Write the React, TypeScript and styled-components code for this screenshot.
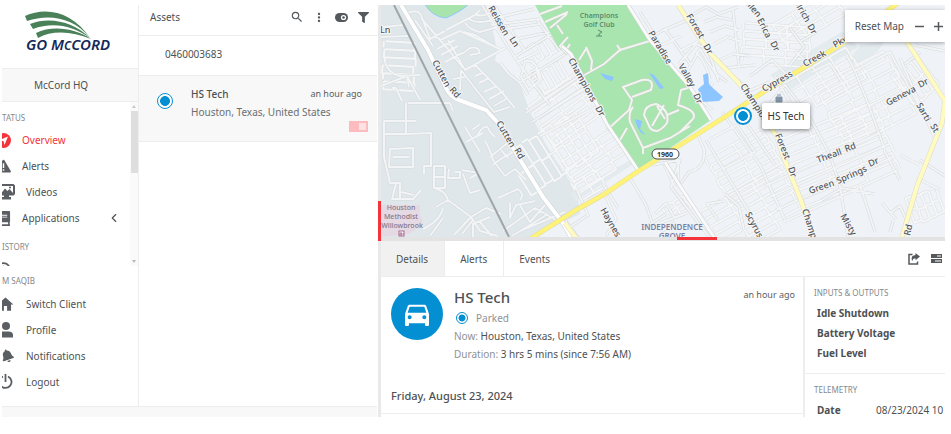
import React from 'react';
import styled, { createGlobalStyle } from 'styled-components';
import { FaBell, FaBook, FaFilter, FaHistory } from 'react-icons/fa';
import { MdDirectionsCar, MdHome, MdMoreVert, MdSearch } from 'react-icons/md';
import { FiChevronLeft } from 'react-icons/fi';

const GlobalStyle = createGlobalStyle`
  * { box-sizing: border-box; }
  body {
    margin: 0;
    background: #fff;
    color: #4d5154;
    font: 10px/18px "Noto Sans", "Open Sans", sans-serif;
  }
  button, input { font: inherit; color: inherit; }
  button { border: 0; padding: 0; background: none; cursor: pointer; }
  svg { display: block; }
`;

const LINE = '#ededed';
const BLUE = '#058fd3';
const RED = '#f5333b';

const Page = styled.div`
  display: grid;
  grid-template-columns: 375px 4px minmax(0, 1fr);
  grid-template-rows: minmax(0, 1fr);
  height: 100vh;
  min-height: 434px;
  padding: 5px 6px 17px 2px;
`;

const LeftSide = styled.div`
  display: grid;
  grid-template-columns: 137px minmax(0, 1fr);
  grid-template-rows: minmax(0, 1fr) 11px;
`;

const Sidebar = styled.aside`
  display: flex;
  flex-direction: column;
  overflow: hidden;
  border-right: 1px solid ${LINE};
`;

const LogoBox = styled.a`
  display: block;
  height: 63px;
  padding: 4px 0 0 19px;
`;

const Client = styled.div`
  height: 34px;
  padding-left: 32px;
  line-height: 32px;
  border: solid ${LINE};
  border-width: 1px 0;
  background: #f8f8f8;
`;

const ScrollArea = styled.div`
  display: flex;
  height: 164px;
  overflow: hidden;
`;

const Nav = styled.nav`
  flex: 1;
  margin-left: -6px;
`;

const SectionLabel = styled.h2`
  margin: 0;
  font-size: 8px;
  font-weight: 400;
  line-height: 18px;
  color: #85888b;
`;

const NavLabel = styled(SectionLabel)<{ $gap?: boolean }>`
  padding: ${p => (p.$gap ? '7px' : '0')} 0 0 6px;
`;

const NavLink = styled.a<{ $active?: boolean }>`
  display: flex;
  align-items: center;
  gap: 11px;
  height: 26px;
  padding-right: 9px;
  color: ${p => (p.$active ? RED : 'inherit')};
  text-decoration: none;
`;

const NavIcon = styled.span<{ $wide?: boolean; $tint?: string }>`
  display: flex;
  justify-content: flex-end;
  width: ${p => (p.$wide ? 19 : 15)}px;
  flex: none;
  color: ${p => p.$tint || '#5b5f63'};
`;

const Grow = styled.span`
  flex: 1;
`;

const Scrollbar = styled.div`
  display: flex;
  flex-direction: column;
  align-items: center;
  gap: 3px;
  width: 8px;
  padding: 3px 0;
  background: #fafafa;
`;

const Thumb = styled.div`
  width: 7px;
  height: 62px;
  background: #dedede;
`;

const StatusNav = styled.div`
  padding-top: 7px;
`;

const AccountNav = styled.div`
  padding-top: 6px;
  & > h2 { padding-bottom: 1px; }
`;

const Footer = styled.footer`
  grid-column: 1 / -1;
  border-top: 1px solid ${LINE};
  background: #f8f8f8;
`;

const Assets = styled.section`
  display: flex;
  flex-direction: column;
  min-width: 0;
`;

const AssetsHeader = styled.header`
  display: flex;
  align-items: center;
  height: 31px;
  padding: 0 7px 6px 11px;
  border-bottom: 1px solid ${LINE};
`;

const PanelTitle = styled.h1`
  flex: 1;
  margin: 0;
  font-size: 10px;
  font-weight: 400;
`;

const Tools = styled.div`
  display: flex;
  gap: 8px;
`;

const Tool = styled.button`
  display: flex;
  align-items: center;
  justify-content: center;
  width: 14px;
  height: 16px;
  color: #55595c;
`;

const GroupRow = styled.div`
  height: 39px;
  padding-left: 26px;
  line-height: 37px;
`;

const AssetRow = styled.article`
  display: grid;
  grid-template-columns: 34px minmax(0, 1fr) auto;
  grid-template-rows: 18px 18px 12px;
  height: 67px;
  padding: 9px 9px 0 18px;
  border: solid ${LINE};
  border-width: 1px 0;
  background: #f8f8f8;
`;

const AssetName = styled.h2`
  margin: 0;
  font-size: 10px;
  font-weight: 500;
  line-height: 18px;
`;

const Muted = styled.span`
  color: #6c6f72;
`;

const Faint = styled.span`
  color: #8f9295;
`;

const Time = styled.time`
  font-size: 9px;
  line-height: 18px;
  color: #5b5e61;
`;

const AssetPlace = styled(Muted)`
  grid-column: 2 / 4;
`;

const Dot = styled.span<{ $size: number }>`
  display: block;
  flex: none;
  width: ${p => p.$size}px;
  height: ${p => p.$size}px;
  border: ${p => (p.$size > 16 ? 2 : 1)}px solid ${BLUE};
  border-radius: 50%;
  padding: 2px;
  background: radial-gradient(circle closest-side, ${BLUE} 0 65%, #fff 75%);
`;

const AssetDot = styled(Dot)`
  grid-row: span 2;
  margin-top: 8px;
`;

const AssetTime = styled(Time)`
  padding-right: 6px;
`;

const ToggleTrack = styled.span`
  grid-column: 3;
  justify-self: end;
  display: flex;
  justify-content: flex-end;
  width: 19px;
  height: 11px;
  padding: 2px;
  background: #fcbcbf;
  &::after {
    content: '';
    width: 7px;
    background: #fde2e3;
  }
`;

const Splitter = styled.div`
  display: flex;
  flex-direction: column;
  margin-left: 1px;
  background: #e9e9e9;
`;

const SplitterGrip = styled.div`
  height: 40px;
  margin-top: 196px;
  background: ${RED};
`;

const Main = styled.main`
  display: grid;
  grid-template-rows: minmax(0, 232fr) 4px minmax(0, 176fr);
  min-width: 0;
`;

const MapPane = styled.div`
  position: relative;
  overflow: hidden;
  background: #eff3f8;
`;

const MapSvg = styled.svg`
  position: absolute;
  inset: 0;
  width: 100%;
  height: 100%;
`;

const MapControls = styled.div`
  position: absolute;
  top: 5px;
  right: 0;
  display: flex;
  align-items: center;
  gap: 5px;
  height: 32px;
  padding-left: 10px;
  background: #fff;
  box-shadow: 0 1px 4px rgba(0, 0, 0, 0.35);
`;

const ResetButton = styled.button`
  margin-right: 3px;
`;

const Marker = styled.div`
  position: absolute;
  left: 62.5%;
  top: 102px;
  border-radius: 50%;
  background: #fff;
`;

const MarkerLabel = styled.div`
  position: absolute;
  left: 28px;
  top: -4px;
  padding: 4px 6px;
  border-radius: 2px;
  background: #fff;
  white-space: nowrap;
  color: #333;
  box-shadow: 0 1px 4px rgba(0, 0, 0, 0.5);
`;

const HSplitter = styled.div`
  background: #e3e3e3;
`;

const HGrip = styled.div`
  width: 40px;
  height: 3px;
  margin-left: 52.5%;
  background: ${RED};
`;

const DetailPane = styled.section`
  display: flex;
  flex-direction: column;
  overflow: hidden;
`;

const TabBar = styled.div`
  display: flex;
  align-items: center;
  flex: none;
  height: 36px;
  padding-right: 2px;
  border-bottom: 1px solid ${LINE};
`;

const Tab = styled.button<{ $active?: boolean; $last?: boolean }>`
  height: 35px;
  padding: 0 16px 0 15px;
  border-right: 1px solid ${p => (p.$last ? 'transparent' : LINE)};
  background: ${p => (p.$active ? '#f1f1f1' : 'transparent')};
`;

const DetailGrid = styled.div`
  display: grid;
  grid-template-columns: minmax(0, 1fr) 140px;
  flex: 1;
  min-height: 0;
`;

const Summary = styled.div`
  display: flex;
  flex-direction: column;
  border-right: 2px solid ${LINE};
`;

const SummaryTop = styled.div`
  display: flex;
  gap: 11px;
  height: 108px;
  padding: 11px 8px 0 10px;
`;

const Avatar = styled.div`
  display: flex;
  align-items: center;
  justify-content: center;
  flex: none;
  width: 52px;
  height: 52px;
  border-radius: 50%;
  background: ${BLUE};
  color: #fff;
`;

const Facts = styled.div`
  flex: 1;
  min-width: 0;
  white-space: nowrap;
`;

const VehicleName = styled.h2`
  margin: 0;
  font-size: 15px;
  font-weight: 500;
  line-height: 19px;
`;

const Status = styled.div`
  display: flex;
  align-items: center;
  gap: 8px;
  height: 20px;
  padding: 2px 0 0 2px;
`;

const Fact = styled.p`
  margin: 0;
  line-height: 18px;
`;

const SummaryTime = styled(Time)`
  line-height: 14px;
`;

const DateHeading = styled.h3`
  margin: 0;
  height: 29px;
  padding-left: 10px;
  font-size: 11px;
  font-weight: 500;
  line-height: 22px;
  border-bottom: 1px solid ${LINE};
`;

const Side = styled.div`
  overflow: hidden;
`;

const SideGroup = styled.section`
  height: 97px;
  padding: 7px 0 0 9px;
  border-bottom: 1px solid ${LINE};
  white-space: nowrap;
`;

const SideHeading = styled(SectionLabel)`
  margin-bottom: 1px;
`;

const SideRow = styled.div`
  display: flex;
  height: 20px;
  padding-left: 3px;
  line-height: 20px;
`;

const SideName = styled.strong`
  min-width: 59px;
  font-weight: 700;
`;

const Logo = () => (
  <svg width="92" height="48" viewBox="21 9 92 48" role="img" aria-label="GO McCORD">
    <g fill="#4a8159">
      <path d="M25 16C46 6 73 12 90 38C73 17 49 14 27 21Z" />
      <path d="M30 24C50 16 74 22 90 38C72 25 52 22 33 29Z" />
      <path d="M36 33C52 25 75 28 91 39C72 31 52 30 38 38Z" />
    </g>
    <text x="26" y="50" fontSize="15" fontWeight="600" fontStyle="italic" fill="#14285a" fontFamily='"Noto Sans", sans-serif'>GO M<tspan fontSize="12">C</tspan>CORD</text>
  </svg>
);

const OverviewIcon = () => (
  <svg width="15" height="15" viewBox="0 0 15 15">
    <circle cx="7.500" cy="7.500" r="7.500" fill="currentColor" />
    <path d="M12 3.500L8.500 12L7.500 8L3.500 7Z" fill="#fff" />
  </svg>
);

const WarningIcon = () => (
  <svg width="16" height="14" viewBox="0 0 16 14">
    <path fill="currentColor" fillRule="evenodd" d="M7.200.7Q8 0 8.800.7L15.900 12.500Q16 14 14.800 14H1.200Q0 14 .1 12.500ZM7.200 4V9H8.800V4ZM7.200 10.500V12H8.800V10.500Z" />
  </svg>
);

const VideoIcon = () => (
  <svg width="18" height="16" viewBox="0 0 18 16">
    <path fill="currentColor" fillRule="evenodd" d="M1.500 0H16.500L18 1.500V10L16.500 11.500H12V13H14V15.500H4V13H7V11.500H1.500L0 10V1.500ZM2 2V9.500H4L8 4.500L10.500 7L12.500 5L16 9V2Z" />
    <circle cx="13" cy="3.600" r="1" fill="currentColor" />
  </svg>
);

const PersonIcon = () => (
  <svg width="16" height="16" viewBox="0 0 16 16">
    <circle cx="7" cy="4" r="4" fill="currentColor" />
    <path d="M0 15.500V13Q0 9.500 4 9.500H9.500Q14 9.500 14 13V15.500Z" fill="currentColor" />
  </svg>
);

const RingingIcon = () => (
  <svg width="20" height="16" viewBox="0 0 20 16">
    <g transform="rotate(-18 11 8)"><FaBell x="5" y="1" size={14} /></g>
    <path d="M5 2Q2 5 3 10" fill="none" stroke="currentColor" strokeWidth="1.500" />
  </svg>
);

const PowerIcon = () => (
  <svg width="17" height="16" viewBox="0 0 17 16">
    <path d="M5 2.500A6 6 0 1 0 10 2.500M7.500 0V8" fill="none" stroke="currentColor" strokeWidth="1.800" />
  </svg>
);

const ToggleIcon = () => (
  <svg width="13" height="9" viewBox="0 0 13 9">
    <rect width="13" height="9" rx="4.500" fill="currentColor" />
    <circle cx="8.500" cy="4.500" r="2.600" fill="#fff" />
    <circle cx="8.500" cy="4.500" r="1.300" fill="currentColor" />
  </svg>
);

const ShareIcon = () => (
  <svg width="12" height="12" viewBox="0 0 12 12">
    <path d="M4.500 1.500H1V11H9.500V8.500" fill="none" stroke="currentColor" strokeWidth="1.500" />
    <path d="M7.500 0L12 3.600L7.500 7.200V5.200Q4.800 5.200 4.300 8.200Q2 2.800 7.500 2.100Z" fill="currentColor" />
  </svg>
);

const ListIcon = () => (
  <svg width="11" height="9" viewBox="0 0 11 9">
    <path fill="currentColor" fillRule="evenodd" d="M0 0H11V4H0ZM6 1.500V2.500H10V1.500ZM0 5H11V9H0ZM4 6.500V7.500H10V6.500Z" />
  </svg>
);

/* Outlines of city blocks: centre, block size, columns, rows, rotation. */
type District = [number, number, number, number, number, number, number];

const districts: District[] = [
  [543, 48, 17, 8, 1, 5, 60],
  [548, 78, 22, 7, 1, 5, 60],
  [572, 105, 26, 8, 3, 6, -35],
  [552, 152, 24, 9, 2, 9, 58],
  [597, 160, 22, 9, 3, 4, -33],
  [588, 185, 14, 10, 2, 2, -30],
  [775, 45, 22, 8, 3, 5, 4],
  [808, 20, 22, 9, 3, 3, -30],
  [822, 82, 19, 12, 4, 3, -30],
  [865, 100, 26, 10, 3, 7, -27],
  [915, 80, 18, 8, 2, 4, 52],
  [745, 165, 32, 8, 2, 6, -29],
  [752, 214, 30, 9, 3, 6, -29],
  [838, 155, 34, 9, 3, 8, -22],
  [925, 205, 13, 8, 2, 4, 70],
  [676, 208, 12, 7, 2, 2, -30],
  [398, 66, 31, 8, 1, 6, 3],
];

const blockPaths = districts.map(([cx, cy, w, h, cols, rows, turn]) => {
  let d = '';
  for (let c = 0; c < cols; c++) {
    for (let r = 0; r < rows; r++) {
      const x = (c - cols / 2) * w + (r % 3);
      const y = (r - rows / 2) * h;
      const open = (c + r * 2) % 4 === 0;
      d += `M${x + 2} ${y}H${x + w - 2}Q${x + w} ${y} ${x + w} ${y + 2}V${y + h}`;
      d += open ? `M${x} ${y}V${y + h - 2}` : `H${x}V${y + 2}Q${x} ${y} ${x + 2} ${y}`;
    }
  }
  return { d, transform: `translate(${cx} ${cy}) rotate(${turn})` };
});

const lanes = [
  'M381 27L404 25M381 37L408 36M385 62Q388 73 400 76L420 75M381 86L407 76L420 100M407 76L409 87',
  'M405 14Q417 8 421 15L430 39L445 31M421 18L440 40L460 31L500 49M415 20L433 46M440 40L447 48L463 68',
  'M446 30L475 15L480 10M465 23Q470 30 480 32L497 27M468 18Q477 25 492 20M475 14Q483 18 492 11M464 32L475 35L494 46',
  'M437 49L455 40M441 55L458 46M445 62L462 53M462 54L470 48Q479 46 480 53L470 55',
  'M448 40L465 70L505 48M461 70L460 90M453 79L465 77M461 70L478 92L494 112L510 107M475 65L500 90L515 108',
  'M475 76L483 73M479 83L489 78M484 92L497 86M489 99L504 91M494 106L508 98M500 63L509 74L519 82L528 95',
  'M408 103H450M406 103V134H383M395 91Q390 86 396 88L402 101M450 103L453 111',
  'M384 121V157L390 183M384 121H416M406 121V134L431 133V166H424V174M390 149L413 148V167H389ZM393 157H409',
  'M434 166H445V188H434ZM434 177H445M390 183H400V200M396 184L392 199H413L421 190M401 192L414 195',
  'M455 172H460V178H448L449 169M462 170L479 173M463 174L470 193L480 190M470 178L478 174',
  'M434 188Q445 190 448 200L471 217M448 200L436 207M471 217L486 208L501 214M471 217L480 231L498 236M471 217L454 235',
  'M423 229Q440 221 443 208M430 236L443 218M462 234L473 220M473 237V224L490 217M479 221L492 236',
  'M465 127L480 152M472 130L480 124M477 136Q486 120 490 132L495 137M466 142L483 133M485 141Q490 149 493 160L505 176',
  'M490 157L510 141M493 165Q500 158 518 150M501 150L508 158M505 176L515 169L526 180M498 198L518 189Q525 194 520 200',
  'M510 203V218L516 205L535 201M520 205L530 222L545 205M503 231L535 208L556 220M512 236L548 214M520 231L565 212',
  'M526 113L610 55M532 122L615 70M540 136L625 92M519 83L575 48M537 20L560 51M513 58L560 29M492 25L540 19',
  'M482 5L510 50L531 81L550 105M494 5L525 51M500 17L534 9M506 29L540 24M512 40L550 32M517 62L540 51',
  'M525 61Q536 58 541 79L529 90L521 77ZM531 72L536 69L539 78L532 82M545 98L573 80M550 110L582 89',
  'M577 190L588 215L570 227M588 200L604 192L616 219L606 236M603 184L618 208M565 220L580 240M630 178L646 205L652 222',
  'M652 165L680 160L671 187L709 237M664 164L674 186M675 151Q680 170 678 187M698 135L704 149Q706 168 689 172L681 183',
  'M655 214L666 203L674 217M643 229L666 214M661 232L675 222M687 213L660 223M718 220L707 204L724 201M725 194L739 206L744 230',
  'M712 125L728 116M706 140L752 217M722 112L760 165L785 220M746 122L775 165M710 139L737 125L755 152L723 169',
  'M640 12L660 44M655 35L665 29L691 65M666 29L690 19L702 39L680 51M662 45L681 36M679 64L696 44L708 49L719 82',
  'M688 70L700 49L716 74L727 82M690 25L697 18M696 52Q706 62 710 79M702 94L713 83M693 92L712 110M704 89L698 111',
  'M694 14L706 7L718 14L738 7M704 22L717 17L732 20M710 32L725 26L739 30M714 44L727 37L740 41M733 10L739 66',
  'M720 60L733 54L750 56M725 68L755 65M738 80L749 91L770 82M750 76L772 60L790 78M770 103L785 85L809 116',
  'M790 28L804 47L790 65M795 51L815 70M801 41L817 32M812 72L830 63L841 81M775 76L790 103M809 116L830 155L840 186L848 237',
  'M846 54L855 71L869 106L900 90M855 71L890 52L923 113M869 106L885 150M900 58L934 137M905 64L920 52M915 45L945 51',
  'M884 150L900 180M822 200L842 188L874 194M765 186L880 133M770 197L889 144M776 210L893 157M784 222L898 170',
  'M882 203L896 219M860 185L875 232M890 213L900 206L906 219M893 221L890 232M920 160L945 176M917 178L940 190M900 155L920 165',
];

const golfPaths = [
  'M579 78L604 64L620 50L653 40M617 45L621 51M586 47L592 61L591 70M579 60L586 49',
  'M540 14L562 6M545 22L568 12M550 28L567 14M557 25L563 34M568 37L560 46L565 52L570 44',
  'M607 130L629 110L632 100L623 87L642 80Q655 78 651 90L632 97',
  'M633 107Q628 113 630 122L643 148L670 138L690 126L680 132L691 121Q701 112 678 105L681 90L691 87',
  'M644 115Q645 105 656 104Q670 110 667 123Q657 136 650 128ZM652 126L664 105M657 106L665 119M667 115L679 110',
  'M643 148V154M627 128L620 140',
];

const cuttenRoad = 'M401 5L428 50L446 88Q450 97 459 100L486 110L498 123L513 148L543 197L563 223L571 237';

const majorRoads = 'M562 46L571 54L607 124L638 170M628 5L650 40L671 65L690 87L711 120M665 162L680 186L714 237';

const yellowMinor = [
  'M678 5L710 53L737 81L758 107L777 137L784 158L800 198L814 237',
  'M907 42L945 101L942 123L917 186L902 237M565 223L580 243',
];

const highway = 'M530 239L576 210L603 195L637 172L680 145L720 120L770 88L803 68L843 43L898 3';

const label = (x: number, y: number, r: number, text: string) => ({ x, y, r, text });

const streetLabels = [
  label(380, 33, 0, 'Ln'),
  label(488, 8, 60, 'Reissen'),
  label(509, 39, 58, 'Ln'),
  label(432, 62, 62, 'Cutten'),
  label(449, 90, 50, 'Rd'),
  label(496, 123, 60, 'Cutten'),
  label(514, 150, 60, 'Rd'),
  label(568, 60, 61, 'Champions'),
  label(595, 108, 61, 'Dr'),
  label(648, 33, 59, 'Paradise'),
  label(678, 66, 60, 'Valley'),
  label(693, 95, 66, 'Dr'),
  label(686, 16, 59, 'Forest'),
  label(703, 46, 60, 'Dr'),
  label(744, 2, 50, 'Ellen'),
  label(757, 20, 63, 'Erica'),
  label(770, 43, 63, 'Dr'),
  label(793, 1, 60, 'Ulrich'),
  label(807, 26, 60, 'Dr'),
  label(740, 86, 57, 'Champions'),
  label(764, 92, -29, 'Cypress'),
  label(805, 67, -29, 'Creek'),
  label(835, 48, -29, 'Pkwy'),
  label(888, 106, -28, 'Geneva'),
  label(920, 88, -28, 'Dr'),
  label(916, 105, 60, 'Sarti'),
  label(930, 126, 60, 'St'),
  label(818, 163, -20, 'Theall'),
  label(846, 152, -20, 'Rd'),
  label(810, 194, -19, 'Green'),
  label(838, 184, -24, 'Springs'),
  label(870, 167, -25, 'Dr'),
  label(775, 135, 68, 'Forest'),
  label(788, 168, 72, 'Dr'),
  label(802, 210, 72, 'Champions'),
  label(840, 216, 60, 'Misty'),
  label(910, 236, -78, 'Rd'),
  label(600, 210, 60, 'Haynes'),
  label(745, 214, 62, 'Scyrus'),
];

const CityMap = () => (
  <MapSvg viewBox="381 5 564 232" preserveAspectRatio="xMidYMid slice" aria-label="Map of Houston, Texas" role="img">
    <path fill="#dfe7eb" d="M381 5H486L492 27L497 50L495 61L508 70L520 84L530 112L545 143L562 170L577 191L580 214L533 237H381Z" />
    <path fill="#e3ebef" d="M640 160L576 201L570 194L634 158ZM770 75L843 31L858 47L790 90ZM860 45L885 41L878 51L860 64L848 62Z" />
    <path fill="#e5dae3" d="M381 205H420V214L423 224L409 234L381 237Z" />
    <path fill="#a9e4ad" stroke="#8fc9ff" d="M424 3Q432 17 446 18Q462 11 470 3Z" />
    <g fill="none" strokeLinejoin="round">
      <g stroke="#dcdfe1" strokeWidth="3">
        {blockPaths.map((b, i) => <path key={i} d={b.d} transform={b.transform} />)}
      </g>
      <g stroke="#f5f6f7" strokeWidth="2">
        {blockPaths.map((b, i) => <path key={i} d={b.d} transform={b.transform} />)}
      </g>
      <path d={lanes.join('')} stroke="#d5d9db" strokeWidth="3" />
      <path d={lanes.join('')} stroke="#f2f4f5" strokeWidth="2" />
    </g>
    <path fill="#a9e6af" d="M535 5H628L650 40L671 65L690 87L711 120L638 170L607 126L570 53L558 47Z" />
    <path d={golfPaths.join('')} fill="none" stroke="#c3cfc3" strokeWidth="3" />
    <path d={golfPaths.join('')} fill="none" stroke="#f1f5f0" strokeWidth="2" />
    <g fill="#8cc5ff">
      <path d="M703 75L708 73L709 84L714 89L723 97L719 101L703 102L698 89L704 84Z" />
      <path d="M600 73L614 77L612 81L605 79ZM649 73L654 75L664 88L660 89ZM635 119L642 121L640 129L646 135L641 133L637 126Z" />
    </g>
    <path d="M394 5L451 120L509 237" fill="none" stroke="#a0a6a9" strokeWidth="2" />
    <path d={majorRoads} fill="none" stroke="#cdd1d3" strokeWidth="4" />
    <path d={majorRoads} fill="none" stroke="#fafafa" strokeWidth="3" />
    <path d={cuttenRoad} fill="none" stroke="#cdd1d3" strokeWidth="5" />
    <path d={cuttenRoad} fill="none" stroke="#fff" strokeWidth="4" />
    <path d={yellowMinor.join('')} fill="none" stroke="#dadbc9" strokeWidth="5" />
    <path d={yellowMinor.join('')} fill="none" stroke="#fffbc0" strokeWidth="4" />
    <path d={highway} fill="none" stroke="#dedca0" strokeWidth="5" />
    <path d={highway} fill="none" stroke="#fff27a" strokeWidth="4" />
    <g fontFamily='"Noto Sans", sans-serif' fontSize="9" fontWeight="500" fill="#54575a" stroke="#f4f6f8" strokeWidth="2" paintOrder="stroke">
      {streetLabels.map((s, i) => (
        <text key={i} transform={`translate(${s.x} ${s.y}) rotate(${s.r})`}>{s.text}</text>
      ))}
    </g>
    <g fontFamily='"Noto Sans", sans-serif' textAnchor="middle">
      <g fill="#5b8c71" fontWeight="600" fontSize="7">
        <text x="599" y="18">Champions</text>
        <text x="599" y="27">Golf Club</text>
        <path d="M598 30L602 32L599 34V36M596 36H602" fill="none" stroke="#5b8c71" />
      </g>
      <g fill="#82788f" fontWeight="500" fontSize="7">
        <text x="401" y="210">Houston</text>
        <text x="401" y="219">Methodist</text>
        <text x="402" y="228">Willowbrook</text>
      </g>
      <g fill="#7a80a0" fontWeight="600" fontSize="8">
        <text x="672" y="230">INDEPENDENCE</text>
        <text x="672" y="239">GROVE</text>
      </g>
      <rect x="652" y="149" width="27" height="10" rx="5" fill="#fff" stroke="#4b4f50" />
      <text x="665" y="157" fontSize="7" fontWeight="700" fill="#333">1960</text>
    </g>
    <rect x="399" y="231" width="5" height="5" fill="#fff" stroke="#a66b91" />
    <path d="M401 232V236M399 234H404" stroke="#a66b91" />
    <path d="M776 97H782V102H776ZM777 95H781" fill="#8295a6" stroke="#8295a6" />
  </MapSvg>
);

const SUMMARY_PLACE = 'Houston, Texas, United States';

export default function App() {
  return (
    <>
      <GlobalStyle />
      <Page>
        <LeftSide>
          <Sidebar>
            <LogoBox href="#"><Logo /></LogoBox>
            <Client>McCord HQ</Client>
            <ScrollArea>
              <Nav>
                <StatusNav>
                  <NavLabel>TATUS</NavLabel>
                  <NavLink href="#" $active><NavIcon $tint={RED}><OverviewIcon /></NavIcon>Overview</NavLink>
                  <NavLink href="#"><NavIcon><WarningIcon /></NavIcon>Alerts</NavLink>
                  <NavLink href="#"><NavIcon $wide><VideoIcon /></NavIcon>Videos</NavLink>
                  <NavLink href="#"><NavIcon><FaBook size={15} /></NavIcon><Grow>Applications</Grow><FiChevronLeft size={14} /></NavLink>
                  <NavLabel $gap>ISTORY</NavLabel>
                  <NavLink href="#" aria-label="History"><NavIcon><FaHistory size={15} /></NavIcon></NavLink>
                </StatusNav>
              </Nav>
              <Scrollbar aria-hidden>
                <svg width="4" height="3"><path d="M2 0L4 3H0Z" fill="#c9c9c9" /></svg>
                <Thumb />
                <Grow />
                <svg width="4" height="3"><path d="M2 3L4 0H0Z" fill="#b9b9b9" /></svg>
              </Scrollbar>
            </ScrollArea>
            <AccountNav>
              <SectionLabel>M SAQIB</SectionLabel>
              <Nav>
                <NavLink href="#"><NavIcon $wide><MdHome size={21} /></NavIcon>Switch Client</NavLink>
                <NavLink href="#"><NavIcon $wide><PersonIcon /></NavIcon>Profile</NavLink>
                <NavLink href="#"><NavIcon $wide><RingingIcon /></NavIcon>Notifications</NavLink>
                <NavLink href="#"><NavIcon $wide><PowerIcon /></NavIcon>Logout</NavLink>
              </Nav>
            </AccountNav>
          </Sidebar>
          <Assets>
            <AssetsHeader>
              <PanelTitle>Assets</PanelTitle>
              <Tools>
                <Tool aria-label="Search"><MdSearch size={16} /></Tool>
                <Tool aria-label="More"><MdMoreVert size={15} /></Tool>
                <Tool aria-label="Toggle"><ToggleIcon /></Tool>
                <Tool aria-label="Filter"><FaFilter size={11} /></Tool>
              </Tools>
            </AssetsHeader>
            <GroupRow>0460003683</GroupRow>
            <AssetRow>
              <AssetDot $size={16} />
              <AssetName>HS Tech</AssetName>
              <AssetTime>an hour ago</AssetTime>
              <AssetPlace>{SUMMARY_PLACE}</AssetPlace>
              <ToggleTrack />
            </AssetRow>
          </Assets>
          <Footer />
        </LeftSide>
        <Splitter><SplitterGrip /></Splitter>
        <Main>
          <MapPane>
            <CityMap />
            <Marker>
              <Dot $size={18} />
              <MarkerLabel>HS Tech</MarkerLabel>
            </Marker>
            <MapControls>
              <ResetButton>Reset Map</ResetButton>
              <Tool aria-label="Zoom out"><svg width="9" height="9"><path d="M0 4.500H9" stroke="currentColor" strokeWidth="1.500" /></svg></Tool>
              <Tool aria-label="Zoom in"><svg width="9" height="9"><path d="M0 4.500H9M4.500 0V9" stroke="currentColor" strokeWidth="1.500" /></svg></Tool>
            </MapControls>
          </MapPane>
          <HSplitter><HGrip /></HSplitter>
          <DetailPane>
            <TabBar>
              <Tab $active>Details</Tab>
              <Tab>Alerts</Tab>
              <Tab $last>Events</Tab>
              <Grow />
              <Tools>
                <Tool aria-label="Share"><ShareIcon /></Tool>
                <Tool aria-label="Display options"><ListIcon /></Tool>
              </Tools>
            </TabBar>
            <DetailGrid>
              <Summary>
                <SummaryTop>
                  <Avatar><MdDirectionsCar size={32} /></Avatar>
                  <Facts>
                    <VehicleName>HS Tech</VehicleName>
                    <Status><Dot $size={12} /><Faint>Parked</Faint></Status>
                    <Fact><Faint>Now:</Faint> {SUMMARY_PLACE}</Fact>
                    <Fact><Faint>Duration:</Faint> 3 hrs 5 mins (since 7:56 AM)</Fact>
                  </Facts>
                  <SummaryTime>an hour ago</SummaryTime>
                </SummaryTop>
                <DateHeading>Friday, August 23, 2024</DateHeading>
              </Summary>
              <Side>
                <SideGroup>
                  <SideHeading as="h3">INPUTS &amp; OUTPUTS</SideHeading>
                  <SideRow><SideName>Idle Shutdown</SideName></SideRow>
                  <SideRow><SideName>Battery Voltage</SideName></SideRow>
                  <SideRow><SideName>Fuel Level</SideName></SideRow>
                </SideGroup>
                <SideGroup>
                  <SideHeading as="h3">TELEMETRY</SideHeading>
                  <SideRow><SideName>Date</SideName><span>08/23/2024 10</span></SideRow>
                </SideGroup>
              </Side>
            </DetailGrid>
          </DetailPane>
        </Main>
      </Page>
    </>
  );
}
